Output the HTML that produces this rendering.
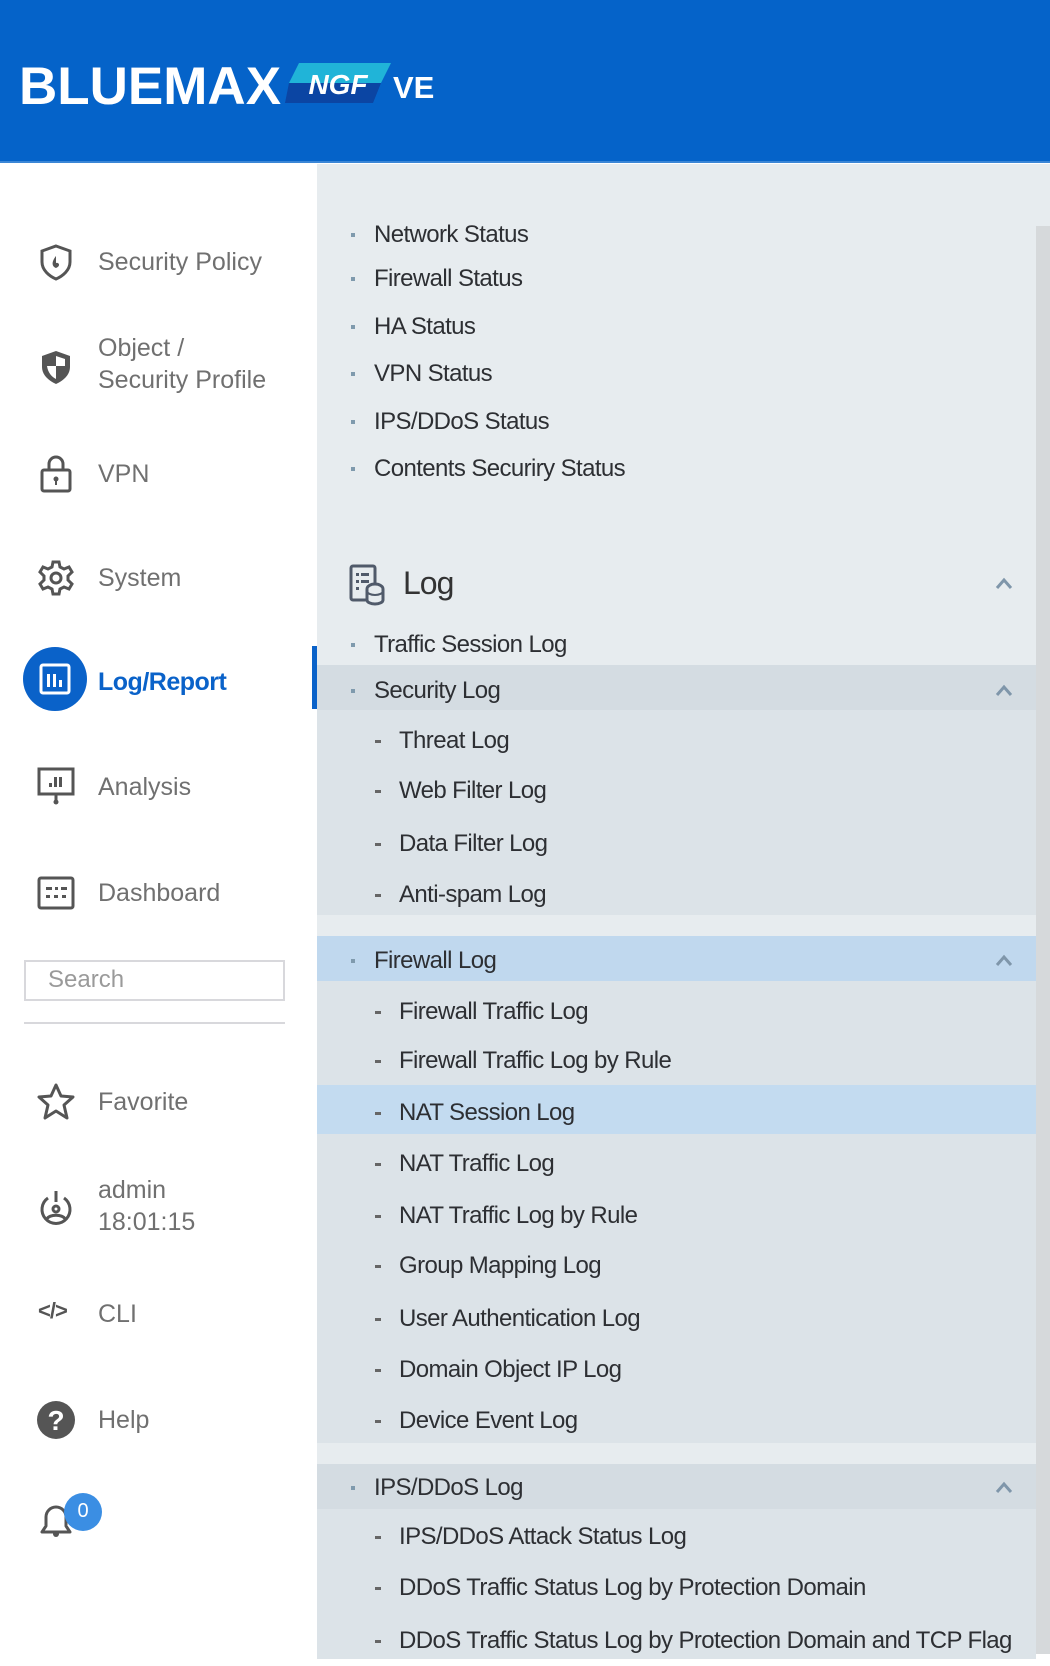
<!DOCTYPE html>
<html><head><meta charset="utf-8"><style>
*{margin:0;padding:0;box-sizing:border-box}
body{width:1050px;height:1654px;overflow:hidden;background:#fff;font-family:"Liberation Sans",sans-serif;position:relative}
.hdr{position:absolute;left:0;top:0;width:1050px;height:163px;background:#0563c9;border-bottom:2px solid #3b86d6}
.logo{position:absolute;left:19px;top:56px;color:#fff;font-weight:bold;font-size:53px;letter-spacing:0px}
.badge{position:absolute;left:285px;top:63px;width:106px;height:40px}
.ve{position:absolute;left:393px;top:70px;color:#fff;font-size:31px;font-weight:bold}
.side{position:absolute;left:0;top:164px;width:317px;height:1490px;background:#fff}
.nav{position:absolute;left:98px;color:#707070;font-size:25px;line-height:32px}
.ic{position:absolute;left:36px;width:40px;height:40px}
.panel{position:absolute;left:317px;top:164px;width:733px;height:1490px;background:#e7ecef}
.scroll{position:absolute;left:1036px;top:226px;width:14px;height:1428px;background:#d6d9db}
.it{position:absolute;left:0;width:719px;height:50px;font-size:24px;letter-spacing:-0.6px;color:#2d2f33;line-height:50px;white-space:nowrap}
.it span{position:absolute;left:57px}
.it i{position:absolute;left:34px;top:23px;width:4px;height:4px;background:#7f9aad}
.sub span{left:82px}.sub i{left:58px;top:24px;width:6px;height:3px;background:#666}
.chev{position:absolute;left:677px;top:17px;width:20px;height:14px}
.bg{position:absolute;left:0;width:719px}
</style></head><body>
<div class="hdr">
<div class="logo">BLUEMAX</div>
<svg class="badge" viewBox="0 0 106 40"><polygon points="14,0 106,0 96,20 4,20" fill="#20b4d8"/><polygon points="4,20 96,20 88,40 0,40" fill="#0b45a3"/><text x="53" y="31" text-anchor="middle" fill="#fff" font-family="Liberation Sans" font-weight="bold" font-style="italic" font-size="28">NGF</text></svg>
<div class="ve">VE</div>
</div>
<div class="side">
<svg class="ic" style="top:78px" viewBox="0 0 40 40"><path d="M20 4 L34 9 V20 C34 28 27 34 20 37 C13 34 6 28 6 20 V9 Z" fill="none" stroke="#555" stroke-width="3"/><path d="M20 14 C16 19 15 24 20 26 C25 24 23 20 20 21 Z" fill="#555"/></svg>
<div class="nav" style="top:82px">Security Policy</div>
<svg class="ic" style="top:183px" viewBox="0 0 40 40"><path d="M20 4 L34 9 V20 C34 28 27 34 20 37 C13 34 6 28 6 20 V9 Z" fill="#555"/><path d="M20 9 L29 12 V19 H20 Z M20 19 H11 C12 26 16 30 20 32 Z" fill="#fff"/></svg>
<div class="nav" style="top:168px">Object /<br>Security Profile</div>
<svg class="ic" style="top:290px" viewBox="0 0 40 40"><rect x="6" y="16" width="28" height="21" rx="2" fill="none" stroke="#555" stroke-width="3"/><path d="M13 16 V10 A7 7 0 0 1 27 10 V16" fill="none" stroke="#555" stroke-width="3"/><circle cx="20" cy="25" r="2.5" fill="#555"/><rect x="19" y="25" width="2" height="6" fill="#555"/></svg>
<div class="nav" style="top:294px">VPN</div>
<svg class="ic" style="top:394px" viewBox="0 0 40 40"><g fill="none" stroke="#555" stroke-width="3"><circle cx="20" cy="20" r="5"/><path d="M17 4 H23 L24 9 L28 11 L33 9 L36 14 L32 18 V22 L36 26 L33 31 L28 29 L24 31 L23 36 H17 L16 31 L12 29 L7 31 L4 26 L8 22 V18 L4 14 L7 9 L12 11 L16 9 Z"/></g></svg>
<div class="nav" style="top:398px">System</div>
<div style="position:absolute;left:23px;top:483px;width:64px;height:64px;border-radius:50%;background:#0a62c9"></div>
<svg style="position:absolute;left:38px;top:498px" width="34" height="34" viewBox="0 0 34 34"><rect x="3" y="3" width="28" height="28" rx="2" fill="none" stroke="#fff" stroke-width="3"/><rect x="9" y="12" width="3" height="13" fill="#fff"/><rect x="15" y="12" width="3" height="13" fill="#fff"/><rect x="21" y="18" width="3" height="7" fill="#fff"/></svg>
<div class="nav" style="top:502px;color:#0a62c9;font-weight:bold;letter-spacing:-0.5px">Log/Report</div>
<div style="position:absolute;left:312px;top:482px;width:5px;height:63px;background:#0a62c9"></div>
<svg class="ic" style="top:602px" viewBox="0 0 40 40"><rect x="3" y="3" width="34" height="25" fill="none" stroke="#555" stroke-width="3"/><rect x="13" y="17" width="3" height="4" fill="#555"/><rect x="18" y="11" width="3" height="10" fill="#555"/><rect x="23" y="11" width="3" height="10" fill="#555"/><path d="M20 28 V36" stroke="#555" stroke-width="3"/><circle cx="20" cy="36" r="2.5" fill="#555"/></svg>
<div class="nav" style="top:607px">Analysis</div>
<svg class="ic" style="top:709px" viewBox="0 0 40 40"><rect x="3" y="5" width="34" height="30" rx="2" fill="none" stroke="#555" stroke-width="3"/><g fill="#555"><rect x="10" y="14" width="6" height="3"/><rect x="19" y="14" width="3" height="3"/><rect x="25" y="14" width="6" height="3"/><rect x="10" y="22" width="4" height="3"/><rect x="18" y="22" width="4" height="3"/><rect x="26" y="22" width="4" height="3"/></g></svg>
<div class="nav" style="top:713px">Dashboard</div>
<div style="position:absolute;left:24px;top:796px;width:261px;height:41px;border:2px solid #d8d8dc;color:#9a9a9a;font-size:24px;line-height:36px;padding-left:22px">Search</div>
<div style="position:absolute;left:24px;top:858px;width:261px;height:2px;background:#d8d8dc"></div>
<svg class="ic" style="top:918px" viewBox="0 0 40 40"><path d="M20 3 L25 14 L37 15 L28 23 L31 36 L20 29 L9 36 L12 23 L3 15 L15 14 Z" fill="none" stroke="#555" stroke-width="3" stroke-linejoin="round"/></svg>
<div class="nav" style="top:922px">Favorite</div>
<svg class="ic" style="top:1024px" viewBox="0 0 40 40"><g fill="none" stroke="#555" stroke-width="3"><path d="M12 10 A14 14 0 1 0 28 10"/><circle cx="20" cy="21" r="3"/><path d="M11 31 C13 26 27 26 29 31"/></g><rect x="18.5" y="3" width="3" height="11" fill="#555"/></svg>
<div class="nav" style="top:1010px">admin<br>18:01:15</div>
<div style="position:absolute;left:38px;top:1134px;font-size:22px;font-weight:bold;color:#555;letter-spacing:-1px">&lt;/&gt;</div>
<div class="nav" style="top:1134px">CLI</div>
<svg class="ic" style="top:1236px" viewBox="0 0 40 40"><circle cx="20" cy="20" r="19" fill="#555"/><text x="20" y="30" text-anchor="middle" fill="#fff" font-family="Liberation Sans" font-weight="bold" font-size="28">?</text></svg>
<div class="nav" style="top:1240px">Help</div>
<svg class="ic" style="top:1335px" viewBox="0 0 40 40"><path d="M6 33 H34 L30 27 V18 A10 10 0 0 0 10 18 V27 Z" fill="none" stroke="#555" stroke-width="3" stroke-linejoin="round"/><circle cx="20" cy="35" r="3" fill="#555"/></svg>
<div style="position:absolute;left:64px;top:1329px;width:38px;height:38px;border-radius:50%;background:#3b8ee3;color:#fff;font-size:20px;text-align:center;line-height:36px">0</div>
</div>
<div class="panel">
<div class="bg" style="top:501px;height:45px;background:#d4dce2"></div>
<div class="bg" style="top:546px;height:205px;background:#dce3e8"></div>
<div class="bg" style="top:772px;height:45px;background:#c0d8ee"></div>
<div class="bg" style="top:817px;height:462px;background:#dce3e8"></div>
<div class="bg" style="top:921px;height:49px;background:#c3dbf0"></div>
<div class="bg" style="top:1300px;height:45px;background:#d4dce2"></div>
<div class="bg" style="top:1345px;height:150px;background:#dce3e8"></div>

<div class="it" style="top:46px"><i></i><span>Network Status</span></div>
<div class="it" style="top:90px"><i></i><span>Firewall Status</span></div>
<div class="it" style="top:138px"><i></i><span>HA Status</span></div>
<div class="it" style="top:185px"><i></i><span>VPN Status</span></div>
<div class="it" style="top:233px"><i></i><span>IPS/DDoS Status</span></div>
<div class="it" style="top:280px"><i></i><span>Contents Securiry Status</span></div>

<svg style="position:absolute;left:32px;top:400px" width="38" height="42" viewBox="0 0 38 42"><rect x="2" y="2" width="24" height="34" rx="2" fill="none" stroke="#505a6a" stroke-width="3"/><g fill="#505a6a"><rect x="7" y="9" width="3" height="3"/><rect x="12" y="9" width="8" height="3"/><rect x="7" y="16" width="3" height="3"/><rect x="12" y="16" width="8" height="3"/><rect x="7" y="23" width="3" height="3"/></g><path d="M18 25 A8 5 0 0 1 34 25 V36 A8 4 0 0 1 18 36 Z" fill="#e7ecef" stroke="#505a6a" stroke-width="3"/><path d="M18 27 A8 4 0 0 0 34 27" fill="none" stroke="#505a6a" stroke-width="2"/></svg>
<div style="position:absolute;left:86px;top:401px;font-size:32px;color:#333;letter-spacing:-1px">Log</div>
<svg class="chev" style="top:412px" viewBox="0 0 20 14"><path d="M3 12 L10 4 L17 12" fill="none" stroke="#7f96aa" stroke-width="3"/></svg>

<div class="it" style="top:456px"><i></i><span>Traffic Session Log</span></div>
<div class="it" style="top:502px"><i></i><span>Security Log</span><svg class="chev" viewBox="0 0 20 14"><path d="M3 12 L10 4 L17 12" fill="none" stroke="#7f96aa" stroke-width="3"/></svg></div>
<div class="it sub" style="top:552px"><i></i><span>Threat Log</span></div>
<div class="it sub" style="top:602px"><i></i><span>Web Filter Log</span></div>
<div class="it sub" style="top:655px"><i></i><span>Data Filter Log</span></div>
<div class="it sub" style="top:706px"><i></i><span>Anti-spam Log</span></div>
<div class="it" style="top:772px"><i></i><span>Firewall Log</span><svg class="chev" viewBox="0 0 20 14"><path d="M3 12 L10 4 L17 12" fill="none" stroke="#7f96aa" stroke-width="3"/></svg></div>
<div class="it sub" style="top:823px"><i></i><span>Firewall Traffic Log</span></div>
<div class="it sub" style="top:872px"><i></i><span>Firewall Traffic Log by Rule</span></div>
<div class="it sub" style="top:924px"><i></i><span>NAT Session Log</span></div>
<div class="it sub" style="top:975px"><i></i><span>NAT Traffic Log</span></div>
<div class="it sub" style="top:1027px"><i></i><span>NAT Traffic Log by Rule</span></div>
<div class="it sub" style="top:1077px"><i></i><span>Group Mapping Log</span></div>
<div class="it sub" style="top:1130px"><i></i><span>User Authentication Log</span></div>
<div class="it sub" style="top:1181px"><i></i><span>Domain Object IP Log</span></div>
<div class="it sub" style="top:1232px"><i></i><span>Device Event Log</span></div>
<div class="it" style="top:1299px"><i></i><span>IPS/DDoS Log</span><svg class="chev" viewBox="0 0 20 14"><path d="M3 12 L10 4 L17 12" fill="none" stroke="#7f96aa" stroke-width="3"/></svg></div>
<div class="it sub" style="top:1348px"><i></i><span>IPS/DDoS Attack Status Log</span></div>
<div class="it sub" style="top:1399px"><i></i><span>DDoS Traffic Status Log by Protection Domain</span></div>
<div class="it sub" style="top:1452px"><i></i><span>DDoS Traffic Status Log by Protection Domain and TCP Flag</span></div>
</div>
<div class="scroll"></div>
</body></html>
